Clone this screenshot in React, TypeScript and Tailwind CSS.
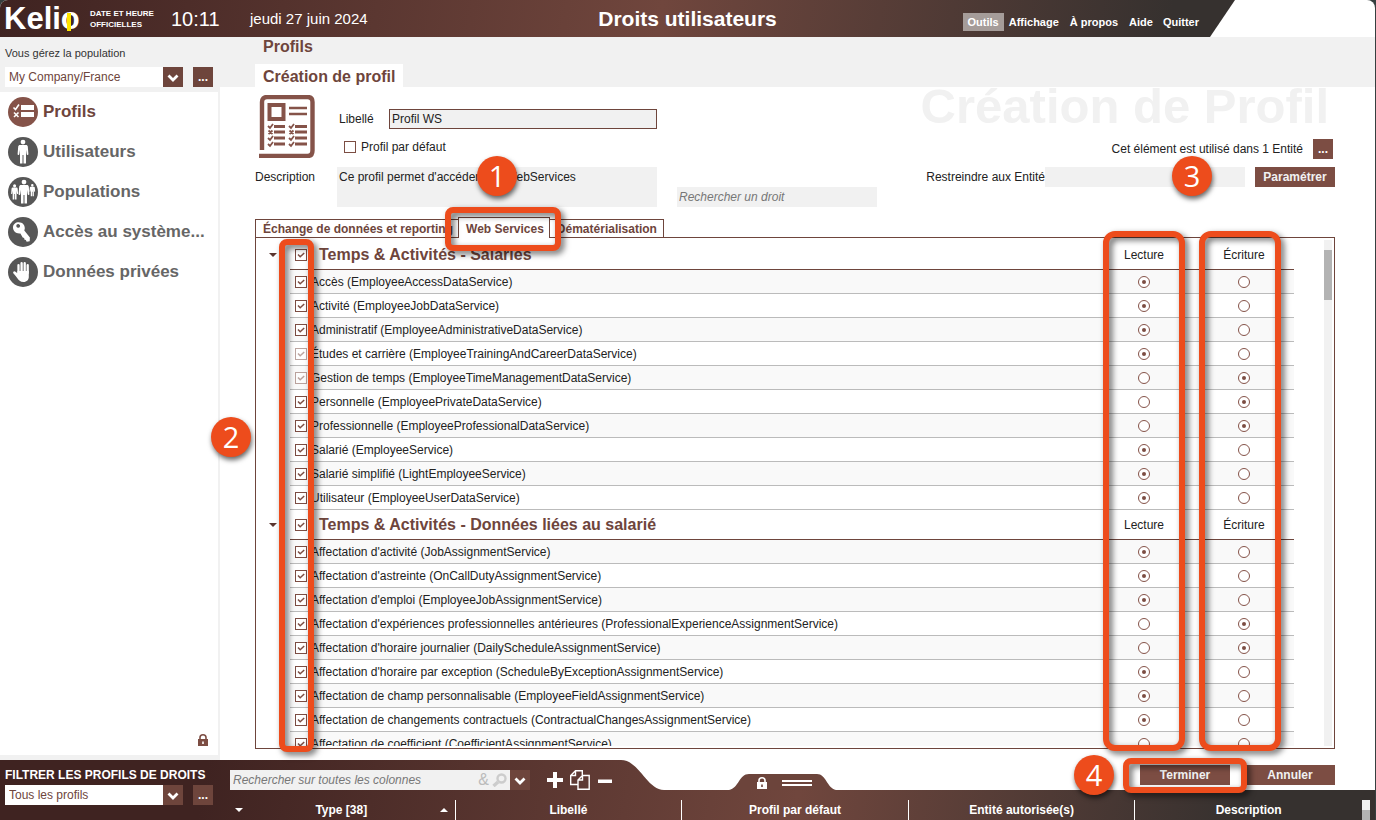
import React from 'react';

interface Service {
    label: string;
    access?: 'read' | 'write';
    locked?: boolean;
}

interface ServiceGroup {
    title: string;
    services: Service[];
}

const groups: ServiceGroup[] = [
    {
        title: 'Temps & Activités - Salariés',
        services: [
            { label: 'Accès (EmployeeAccessDataService)', access: 'read' },
            { label: 'Activité (EmployeeJobDataService)', access: 'read' },
            { label: 'Administratif (EmployeeAdministrativeDataService)', access: 'read' },
            { label: 'Études et carrière (EmployeeTrainingAndCareerDataService)', access: 'read', locked: true },
            { label: 'Gestion de temps (EmployeeTimeManagementDataService)', access: 'write', locked: true },
            { label: 'Personnelle (EmployeePrivateDataService)', access: 'write' },
            { label: 'Professionnelle (EmployeeProfessionalDataService)', access: 'write' },
            { label: 'Salarié (EmployeeService)', access: 'read' },
            { label: 'Salarié simplifié (LightEmployeeService)', access: 'read' },
            { label: 'Utilisateur (EmployeeUserDataService)', access: 'read' },
        ],
    },
    {
        title: 'Temps & Activités - Données liées au salarié',
        services: [
            { label: "Affectation d'activité (JobAssignmentService)", access: 'read' },
            { label: "Affectation d'astreinte (OnCallDutyAssignmentService)", access: 'read' },
            { label: "Affectation d'emploi (EmployeeJobAssignmentService)", access: 'read' },
            { label: "Affectation d'expériences professionnelles antérieures (ProfessionalExperienceAssignmentService)", access: 'write' },
            { label: "Affectation d'horaire journalier (DailyScheduleAssignmentService)", access: 'write' },
            { label: "Affectation d'horaire par exception (ScheduleByExceptionAssignmentService)", access: 'read' },
            { label: 'Affectation de champ personnalisable (EmployeeFieldAssignmentService)', access: 'read' },
            { label: 'Affectation de changements contractuels (ContractualChangesAssignmentService)', access: 'read' },
            { label: 'Affectation de coefficient (CoefficientAssignmentService)' },
        ],
    },
];

const columns = ['Type [38]', 'Libellé', 'Profil par défaut', 'Entité autorisée(s)', 'Description'];

const ChecklistIcon = () => (
    <svg viewBox="0 0 30 30" className="size-[30px]">
        <circle cx="15" cy="15" r="15" fill="#855349" />
        <path d="M13 8h13v5H13zM13 15h13v5H13z" fill="#fff" />
        <path d="M5.500 10.500l2 2 3.500-5M6 15.500l4.500 4.500M10.500 15.500L6 20" fill="none" stroke="#fff" strokeWidth="1.600" />
    </svg>
);

const personPath =
    'M15 2.700a2.400 2.400 0 1 1 0 4.800 2.400 2.400 0 0 1 0-4.800zM12 8h6c1 0 1.600.600 1.800 1.600l.600 7.400c0 1.200-1.500 1.400-1.700.200l-.700-4.400V26.500h-2.500V18h-1v8.500H12V12.800l-.700 4.400c-.200 1.200-1.700 1-1.700-.200l.600-7.400C10.400 8.600 11 8 12 8z';

const PersonIcon = () => (
    <svg viewBox="0 0 30 30" className="size-[30px]">
        <circle cx="15" cy="15" r="15" fill="#575757" />
        <path d={personPath} fill="#fff" />
    </svg>
);

const PeopleIcon = () => (
    <svg viewBox="0 0 30 30" className="size-[30px]">
        <circle cx="15" cy="15" r="15" fill="#575757" />
        <path d={personPath} fill="#fff" transform="translate(1 0)" />
        <path d={personPath} fill="#fff" transform="translate(-3 5.500) scale(.640)" />
        <path d={personPath} fill="#fff" transform="translate(16.500 5.500) scale(.520)" />
    </svg>
);

const KeyIcon = () => (
    <svg viewBox="0 0 30 30" className="size-[30px]">
        <circle cx="15" cy="15" r="15" fill="#575757" />
        <path
            fillRule="evenodd"
            fill="#fff"
            d="M5 10.500c0-3.200 2.600-5.200 5.600-5.200 4.200 0 6.400 3 6.200 6.300l-.500 2 5.600 6.800-.200 3.800-3 .600-.900-1.900-1.500-.300-.100-1.600-1.500-.600-2.300-4C8.200 17 5 14.100 5 10.500zm3.300-1.800a1.900 1.900 0 1 0 2.700-1.500 1.900 1.900 0 0 0-2.700 1.500z"
        />
    </svg>
);

const HandIcon = () => (
    <svg viewBox="0 0 30 30" className="size-[30px]">
        <circle cx="15" cy="15" r="15" fill="#575757" />
        <path
            d="M10.500 17V8.200M13.600 16V6.200M16.700 16V6.200M19.700 16V8.200M10.500 19l-4.200-3.500"
            stroke="#fff"
            strokeWidth="2.300"
            strokeLinecap="round"
        />
        <path d="M9.400 14h11.400v6c0 2.500-1.800 5-5.300 5-3.300 0-4.800-1.600-6.500-4.200l-3.400-4.500 1.700-1.500 2.100 1.800z" fill="#fff" />
    </svg>
);

const ProfileSheetIcon = () => (
    <svg viewBox="0 0 56 63" className="w-[56px] h-[63px]" fill="none" stroke="#855349">
        <path d="M3 55V7q0-5 5-5h40.500q5 0 5 5v48.500q0 5.500-5 5.500H0" strokeWidth="4.400" />
        <path d="M10.500 10h14v14h-14z" strokeWidth="4" />
        <path d="M30 13h18M30 19h18" strokeWidth="2.500" />
        <path d="M15 31.500h11M15 37h11M15 43h11M15 49h11M36 31.500h12M36 37h12M36 43h12M36 49h12" strokeWidth="3.200" />
        <path
            d="M9 31l2 2 3-4M9.500 35.500l4 3.500m0-3.500l-4 3.500M9 43l2 2 3-4M9 49l2 2 3-4M30 31l2 2 3-4M30.500 35.500l4 3.500m0-3.500l-4 3.500M30 43l2 2 3-4M30 49l2 2 3-4"
            strokeWidth="1.800"
        />
    </svg>
);

const LockIcon = ({ className }: { className: string }) => (
    <svg viewBox="0 0 10 12" className={`w-[10px] h-[12px] ${className}`}>
        <path d="M2 5.500V3.500a3 2.700 0 0 1 6 0v2" fill="none" stroke="currentColor" strokeWidth="1.600" />
        <path fillRule="evenodd" fill="currentColor" d="M0 5h10v7H0zM4.200 7.500v2.500h1.600V7.500z" />
    </svg>
);

const ChevronBox = () => (
    <span className="pointer-events-none absolute right-0 top-0 grid size-5 place-items-center bg-[#6e453c]">
        <svg viewBox="0 0 12 8" className="mt-[2px] h-[8px] w-[12px]">
            <path d="M1.500 1.500L6 6l4.500-4.500" fill="none" stroke="#fff" strokeWidth="2.800" />
        </svg>
    </span>
);

const SelectBox = ({ label, value }: { label: string; value: string }) => (
    <div className="flex gap-[10px]">
        <div className="relative w-[178px]">
            <select
                aria-label={label}
                className="block h-5 w-full appearance-none bg-white pl-1 pr-5 text-[12px] leading-5 text-[#6e453c]"
            >
                <option>{value}</option>
            </select>
            <ChevronBox />
        </div>
        <button className="size-5 bg-[#6e453c] text-[12px] font-bold leading-5 text-white">...</button>
    </div>
);

const CheckBox = ({ label, id, checked, locked }: { label?: string; id?: string; checked?: boolean; locked?: boolean }) => (
    <span className={`relative block size-3 ${locked ? 'opacity-50' : ''}`}>
        <input
            type="checkbox"
            id={id}
            aria-label={label}
            defaultChecked={checked}
            disabled={locked}
            className="peer block size-3 appearance-none border border-[#7c4d43] bg-white"
        />
        <svg viewBox="0 0 12 12" className="pointer-events-none absolute left-0 top-0 hidden size-3 peer-checked:block">
            <path d="M3 5.500l2.200 2.300L9.200 4" fill="none" stroke="#7c4d43" strokeWidth="1.500" />
        </svg>
    </span>
);

const Radio = ({ name, label, checked }: { name: string; label: string; checked: boolean }) => (
    <input
        type="radio"
        name={name}
        aria-label={label}
        defaultChecked={checked}
        className="mx-auto grid size-3 appearance-none place-content-center rounded-full border border-[#855349] bg-white before:size-1 before:rounded-full checked:before:bg-[#7c4d43]"
    />
);

const Step = ({ n, className }: { n: number; className: string }) => (
    <span
        className={`pointer-events-none absolute z-20 grid size-10 place-items-center rounded-full bg-[#ed4c1c] font-['Open_Sans',sans-serif] text-[29px] font-normal leading-10 text-white shadow-[1px_3px_5px_rgba(0,0,0,0.6)] ${className}`}
    >
        {n}
    </span>
);

const Frame = ({ className }: { className: string }) => (
    <span
        className={`pointer-events-none absolute z-10 border-[6px] border-[#ed4c1c] drop-shadow-[3px_3px_3px_rgba(0,0,0,0.6)] ${className}`}
    />
);

const Header = () => (
    <header className="grid h-[37px] shrink-0 grid-cols-[1fr_auto_1fr] items-center bg-[linear-gradient(100deg,#3f2321_0%,#70463d_48%,#36312f_85%)] text-white [clip-path:polygon(0_0,calc(100%-140px)_0,calc(100%-165px)_100%,0_100%)]">
        <div className="flex items-center">
            <div className="relative ml-1 w-[86px] text-[31px] font-bold leading-9">
                Kelio
                <span className="absolute left-[63px] top-[12px] h-[18px] w-1 bg-[#ffe600]" />
            </div>
            <p className="w-[81px] text-[8px] font-bold leading-[11px]">
                DATE ET HEURE
                <br />
                OFFICIELLES
            </p>
            <p className="w-[79px] text-[20px] leading-9">10:11</p>
            <p className="text-[15px] leading-9">jeudi 27 juin 2024</p>
        </div>
        <h1 className="text-[21px] font-bold leading-9">Droits utilisateurs</h1>
        <nav className="mt-[7px] flex justify-end whitespace-nowrap pr-[176px] text-[11px] font-bold leading-[18px]">
            <a href="#outils" className="bg-[#a59c99] px-[5px]">Outils</a>
            <a href="#affichage" className="px-[5px]">Affichage</a>
            <a href="#apropos" className="px-[6px]">À propos</a>
            <a href="#aide" className="px-[5px]">Aide</a>
            <a href="#quitter" className="pl-[5px]">Quitter</a>
        </nav>
    </header>
);

const menu = [
    { label: 'Profils', Icon: ChecklistIcon },
    { label: 'Utilisateurs', Icon: PersonIcon },
    { label: 'Populations', Icon: PeopleIcon },
    { label: 'Accès au système...', Icon: KeyIcon },
    { label: 'Données privées', Icon: HandIcon },
];

const Sidebar = () => (
    <aside className="flex w-[220px] shrink-0 flex-col bg-[#f1f1f1] pb-[5px] pr-[2px]">
        <div className="h-[55px] pl-[5px] pt-2">
            <p className="mb-[6px] text-[11px] leading-4 text-[#333]">Vous gérez la population</p>
            <SelectBox label="Population" value="My Company/France" />
        </div>
        <nav className="flex flex-1 flex-col gap-[10px] bg-white pl-2 pt-[5px]">
            {menu.map(({ label, Icon }, i) => (
                <a
                    key={label}
                    href="#menu"
                    className={`flex h-[30px] items-center gap-[5px] whitespace-nowrap text-[17px] font-bold leading-8 ${i === 0 ? 'text-[#6e453c]' : 'text-[#666]'}`}
                >
                    <Icon />
                    {label}
                </a>
            ))}
            <LockIcon className="mb-[9px] ml-auto mr-[10px] mt-auto text-[#7c4d43]" />
        </nav>
    </aside>
);

const ProfileForm = () => (
    <section className="flex h-[120px] shrink-0 pl-[35px] pr-10">
        {/* Identity */}
        <div className="w-[402px]">
            <div className="flex h-20">
                <div className="w-[84px] pl-1 pt-2">
                    <ProfileSheetIcon />
                </div>
                <div className="flex-1 pt-[22px]">
                    <div className="flex">
                        <label htmlFor="libelle" className="w-[50px] leading-5">Libellé</label>
                        <input
                            id="libelle"
                            defaultValue="Profil WS"
                            className="h-5 min-w-0 flex-1 border border-[#6e453c] bg-[#f1f1f1] px-[2px]"
                        />
                    </div>
                    <div className="mt-2 flex items-center gap-[5px] pl-[5px]">
                        <CheckBox id="defaut" />
                        <label htmlFor="defaut" className="leading-5">Profil par défaut</label>
                    </div>
                </div>
            </div>
            <div className="flex">
                <label htmlFor="description" className="w-[82px] leading-5">Description</label>
                <textarea
                    id="description"
                    defaultValue="Ce profil permet d'accéder aux WebServices"
                    className="block h-10 flex-1 resize-none bg-[#f1f1f1] px-[2px] leading-5"
                />
            </div>
        </div>
        <input
            aria-label="Rechercher un droit"
            placeholder="Rechercher un droit"
            className="ml-5 h-5 w-[200px] self-end bg-[#f1f1f1] px-[2px] italic placeholder:text-[#777]"
        />
        {/* Entities */}
        <div className="ml-auto flex flex-col items-end">
            <p className="h-[52px] whitespace-nowrap pr-[6px] text-[49px] font-bold leading-[38px] text-[#f1f1f1]">
                Création de Profil
            </p>
            <div className="flex gap-[10px] pr-[2px] leading-5">
                Cet élément est utilisé dans 1 Entité
                <button className="size-5 bg-[#7c4d43] font-bold leading-5 text-white">...</button>
            </div>
            <div className="mt-2 flex">
                <label htmlFor="entite" className="leading-5">Restreindre aux Entité</label>
                <div className="relative mr-[10px]">
                    <input id="entite" className="block h-5 w-[200px] bg-[#f1f1f1]" />
                    <Step n={3} className="-top-[11px] left-[127px]" />
                </div>
                <button className="h-5 w-20 bg-[#7c4d43] font-bold text-[#f1f1f1]">Paramétrer</button>
            </div>
        </div>
    </section>
);

const Tabs = () => (
    <div className="mt-[10px] flex h-5 shrink-0 items-end pl-[35px] font-bold text-[#6e453c]">
        <button className="h-[18px] border border-b-0 border-[#6e453c] pl-[7px] pr-[5px] leading-[18px]">
            Échange de données et reporting
        </button>
        <div className="relative z-10 -mb-px -ml-px">
            <button className="block h-[21px] border border-b-0 border-[#6e453c] bg-white pl-[7px] pr-[5px] leading-[22px]">
                Web Services
            </button>
            <Frame className="-left-[13px] -top-[10px] h-[44px] w-[116px] rounded-lg" />
            <Step n={1} className="-top-[61px] left-[19px]" />
        </div>
        <button className="-ml-px h-[18px] border border-b-0 border-[#6e453c] pl-[7px] pr-[6px] leading-[18px]">
            Dématérialisation
        </button>
    </div>
);

const RightsTable = () => (
    <div className="relative mb-[11px] ml-[35px] mr-10 flex min-h-0 flex-1 border border-[#6e453c] py-[2px]">
        <div className="min-h-0 flex-1 overflow-hidden">
            <table className="w-full table-fixed border-separate border-spacing-0">
                <colgroup>
                    <col className="w-[34px]" />
                    <col className="w-[21px]" />
                    <col />
                    <col className="w-[100px]" />
                    <col className="w-[100px]" />
                </colgroup>
                {groups.map((group, g) => (
                    <tbody key={group.title}>
                        <tr className="h-[30px] *:p-0">
                            <td>
                                <svg viewBox="0 0 8 4" className="ml-[13px] h-[4px] w-[8px]">
                                    <path d="M0 0h8L4 4z" fill="#5a352e" />
                                </svg>
                            </td>
                            <td className="border-b border-[#6e453c] pl-[5px]!">
                                <CheckBox label={group.title} checked />
                            </td>
                            <th className="border-b border-[#6e453c] pl-2! text-left text-[16px] leading-5 text-[#6e453c]">
                                {group.title}
                            </th>
                            <th className="border-b border-[#6e453c] font-normal">Lecture</th>
                            <th className="border-b border-[#6e453c] font-normal">Écriture</th>
                        </tr>
                        {group.services.map((service, i) => {
                            const name = `right-${g}-${i}`;
                            const cell = `${i % 2 === 0 ? 'bg-[#f9f9f9]' : 'bg-white'} border-b border-[#bbb]`;
                            return (
                                <tr key={service.label} className="h-6 *:p-0">
                                    <td />
                                    <td className={`${cell} pl-[5px]!`}>
                                        <CheckBox label={service.label} checked locked={service.locked} />
                                    </td>
                                    <td className={`${cell} whitespace-nowrap leading-4`}>{service.label}</td>
                                    <td className={cell}>
                                        <Radio name={name} label="Lecture" checked={service.access === 'read'} />
                                    </td>
                                    <td className={cell}>
                                        <Radio name={name} label="Écriture" checked={service.access === 'write'} />
                                    </td>
                                </tr>
                            );
                        })}
                    </tbody>
                ))}
            </table>
        </div>
        {/* Scrollbar */}
        <div className="ml-[30px] mr-[2px] w-2 bg-[#f1f1f1] pt-[10px]">
            <div className="h-[50px] bg-[#b3b3b3]" />
        </div>
        <Frame className="-bottom-1 left-[23px] top-px w-[35px] rounded-lg" />
        <Step n={2} className="-left-[45px] top-[179px]" />
        <Frame className="-bottom-[3px] -top-[7px] right-[149px] w-[82px] rounded-xl" />
        <Frame className="-bottom-[3px] -top-[7px] right-[53px] w-[82px] rounded-xl" />
    </div>
);

const Footer = () => (
    <footer className="flex h-[60px] shrink-0 bg-[linear-gradient(100deg,#3f2321_0%,#3f2321_15%,#70463d_58%,#36312f_90%)] text-white">
        <div className="w-[220px] shrink-0 pl-[5px] pt-[5px]">
            <p className="font-bold leading-5">FILTRER LES PROFILS DE DROITS</p>
            <SelectBox label="Filtrer les profils de droits" value="Tous les profils" />
        </div>
        <div className="min-w-0 flex-1">
            <div className="flex h-[30px]">
                {/* Toolbar */}
                <div className="flex shrink-0 items-center pl-[10px] pt-[10px]">
                    <div className="relative w-[300px]">
                        <input
                            aria-label="Rechercher sur toutes les colonnes"
                            placeholder="Rechercher sur toutes les colonnes"
                            className="block h-5 w-full bg-[#f1f1f1] px-[3px] italic text-[#333] placeholder:text-[#777]"
                        />
                        <span className="absolute right-[41px] top-0 text-[16px] leading-5 text-[#bbb]">&amp;</span>
                        <svg viewBox="0 0 15 14" className="absolute right-[23px] top-[3px] h-[14px] w-[15px]" fill="none" stroke="#ccc">
                            <circle cx="9.500" cy="5.500" r="4" strokeWidth="2.400" />
                            <path d="M6 9l-4.500 4" strokeWidth="3.400" />
                        </svg>
                        <ChevronBox />
                    </div>
                    <button aria-label="Ajouter" className="ml-[17px]">
                        <svg viewBox="0 0 16 16" className="size-4">
                            <path d="M6 0h4v6h6v4h-6v6H6v-6H0V6h6z" fill="#fff" />
                        </svg>
                    </button>
                    <button aria-label="Dupliquer" className="ml-[7px]">
                        <svg viewBox="0 0 20 20" className="size-5" fill="none" stroke="#fff" strokeWidth="1.400">
                            <path d="M8 14.500H.700V5.500L5.500.700h6.800V5M5.500.700v4.800H.700" />
                            <path d="M8 19.200V10l4.500-4.500h6.700v13.700zM12.500 5.500V10H8" />
                        </svg>
                    </button>
                    <button aria-label="Supprimer" className="ml-2">
                        <svg viewBox="0 0 14 16" className="h-4 w-[14px]">
                            <path d="M0 7.500h14v3.500H0z" fill="#fff" />
                        </svg>
                    </button>
                </div>
                <svg viewBox="0 0 52 30" className="ml-[1px] h-[30px] w-[52px] shrink-0">
                    <path d="M8 0H52V30h-1C34 30 26 0 8 0z" fill="#fff" />
                </svg>
                <div className="flex min-w-0 flex-1 items-end bg-white">
                    <button aria-label="Verrouiller le panneau" className="relative ml-[64px] block text-white">
                        <svg viewBox="0 0 107 16" className="block h-4 w-[107px]">
                            <path d="M0 16C10 14 10 0 20 0h68c9 0 10 14 19 16z" fill="#6c443b" />
                            <path d="M53 7h30M53 11h30" stroke="#fff" strokeWidth="2" />
                        </svg>
                        <LockIcon className="absolute left-[28px] top-[3px]" />
                    </button>
                    <div className="mb-[5px] ml-auto mr-10 flex gap-[15px]">
                        <div className="relative">
                            <button className="block h-5 w-[90px] bg-[#7c4d43] font-bold text-[#f1f1f1]">Terminer</button>
                            <Frame className="-left-[17px] -top-[7px] h-[35px] w-[124px] rounded-lg" />
                            <Step n={4} className="-left-[66px] -top-[10px]" />
                        </div>
                        <button className="block h-5 w-[90px] bg-[#7c4d43] font-bold text-[#f1f1f1]">Annuler</button>
                    </div>
                </div>
            </div>
            <div className="flex h-[30px] pl-[9px] pr-[5px] pt-[10px]">
                <div className="min-w-0 flex-1">
                    <table className="h-5 w-full table-fixed border-separate border-spacing-0">
                        <thead>
                            <tr>
                                {columns.map((column, i) => (
                                    <th key={column} className={`h-5 p-0 leading-5 ${i < columns.length - 1 ? 'border-r border-white' : ''}`}>
                                        {i === 0 ? (
                                            <div className="flex items-center justify-between pl-[6px] pr-[7px]">
                                                <svg viewBox="0 0 8 4" className="h-[4px] w-[8px]">
                                                    <path d="M0 0h8L4 4z" fill="#fff" />
                                                </svg>
                                                {column}
                                                <svg viewBox="0 0 8 4" className="h-[4px] w-[8px]">
                                                    <path d="M0 4h8L4 0z" fill="#fff" />
                                                </svg>
                                            </div>
                                        ) : (
                                            column
                                        )}
                                    </th>
                                ))}
                            </tr>
                        </thead>
                    </table>
                </div>
                <div className="w-2 bg-[#b3b3b3]">
                    <div className="h-[10px] bg-[#f1f1f1]" />
                </div>
            </div>
        </div>
    </footer>
);

const App: React.FC = () => (
    <div className="h-screen bg-[#363f3f] pr-px font-['Liberation_Sans',Arial,sans-serif] text-[12px] text-[#222]">
        <div className="flex h-full flex-col overflow-hidden rounded-t-lg bg-white">
            <Header />
            <div className="flex min-h-0 flex-1">
                <Sidebar />
                <main className="flex min-w-0 flex-1 flex-col">
                    <div className="flex h-[50px] shrink-0 flex-col items-start bg-[#f1f1f1] pl-[35px] text-[16px] font-bold text-[#6e453c]">
                        <h2 className="h-[27px] pl-2 leading-5">Profils</h2>
                        <h3 className="h-[23px] bg-white px-2 leading-[25px]">Création de profil</h3>
                    </div>
                    <ProfileForm />
                    <Tabs />
                    <RightsTable />
                </main>
            </div>
            <Footer />
        </div>
    </div>
);

export default App;
